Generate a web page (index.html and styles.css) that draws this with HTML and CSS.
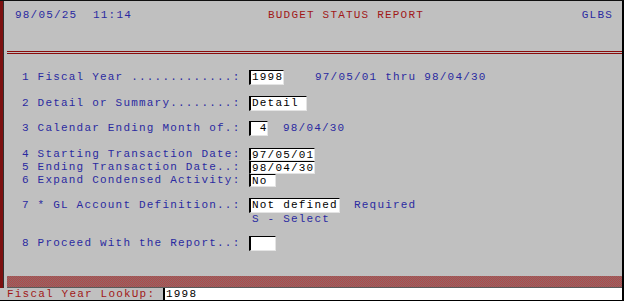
FILE: index.html
```html
<!DOCTYPE html>
<html lang="en">
<head>
    <meta charset="UTF-8">
    <title>Budget Status Report</title>
    <link rel="stylesheet" href="styles.css">
</head>
<body>
    <div class="screen">
        <div class="main">
            <div class="header">
                <span class="blue">98/05/25  11:14</span>
                <span class="red">BUDGET STATUS REPORT</span>
                <span class="blue">GLBS</span>
            </div>
            <div class="rule"></div>

            <div class="form">
                <div class="row r1">
                    <span class="label">1 Fiscal Year .............:</span>
                    <span class="field w35">1998</span>
                    <span class="note gap31">97/05/01 thru 98/04/30</span>
                </div>
                <div class="row r2">
                    <span class="label">2 Detail or Summary........:</span>
                    <span class="field w58">Detail</span>
                </div>
                <div class="row r3">
                    <span class="label">3 Calendar Ending Month of.:</span>
                    <span class="field w19"> 4</span>
                    <span class="note gap15">98/04/30</span>
                </div>
                <div class="row r4">
                    <span class="label">4 Starting Transaction Date:</span>
                    <span class="field w66 short">97/05/01</span>
                </div>
                <div class="row r5">
                    <span class="label">5 Ending Transaction Date..:</span>
                    <span class="field w66 short">98/04/30</span>
                </div>
                <div class="row r6">
                    <span class="label">6 Expand Condensed Activity:</span>
                    <span class="field w27 short">No</span>
                </div>
                <div class="row r7">
                    <span class="label">7 * GL Account Definition..:</span>
                    <span class="field w91">Not defined</span>
                    <span class="note gap14">Required</span>
                </div>
                <div class="row r7b">
                    <span class="label"></span>
                    <span class="note hint">S - Select</span>
                </div>
                <div class="row r8">
                    <span class="label">8 Proceed with the Report..:</span>
                    <span class="field w27"></span>
                </div>
            </div>

            <div class="band"></div>
        </div>
        <div class="status">
            <span class="status-label">Fiscal Year LookUp:</span>
            <span class="status-field">1998</span>
        </div>
    </div>
</body>
</html>
```

FILE: styles.css
```css
body {
    margin: 0;
    background: #ffffff;
}

.screen {
    width: 624px;
    height: 301px;
    box-sizing: border-box;
    border-top: 1px solid #101010;
    border-right: 2px solid #000;
    border-bottom: 1px solid #000;
    background: #c0c0c0;
    font-family: "Liberation Mono", "DejaVu Sans Mono", monospace;
    font-size: 11px;
    letter-spacing: 1.2px;
    display: flex;
    flex-direction: column;
}

.main {
    height: 287px;
    border-left: 3px solid #7c1010;
    box-shadow: inset 1px 0 0 #303030;
    display: flex;
    flex-direction: column;
}

.blue {
    color: #2a2aa0;
}

.red {
    color: #a01818;
}

.header {
    height: 50px;
    box-sizing: border-box;
    padding: 7px 9px 0 12px;
    line-height: 14px;
    display: grid;
    grid-template-columns: 253px 1fr auto;
    white-space: pre;
}

.rule {
    margin-left: 4px;
    height: 1px;
    border-top: 1px solid #8a0c0c;
    border-bottom: 1px solid #8a0c0c;
}

.form {
    padding-left: 19px;
    display: flex;
    flex-direction: column;
    color: #2a2aa0;
}

.row {
    display: flex;
    align-items: center;
    height: 16px;
    white-space: pre;
}

.r1 { margin-top: 15px; }
.r2 { margin-top: 10px; }
.r3 { margin-top: 9px; }
.r4 { margin-top: 11px; height: 14px; }
.r5 { height: 12px; }
.r6 { height: 14px; }
.r7 { margin-top: 10px; }
.r7b { height: 11px; }
.r8 { margin-top: 11px; }

.label {
    width: 227px;
    flex: none;
}

.field {
    height: 15px;
    box-sizing: border-box;
    background: #fff;
    color: #000;
    border-top: 1px solid #000;
    border-left: 2px solid #000;
    border-right: 1px solid #e4e4e4;
    border-bottom: 1px solid #e4e4e4;
    padding-left: 1px;
    line-height: 13px;
    overflow: hidden;
}

.field.short {
    height: 13px;
    line-height: 12px;
}

.w19 { width: 19px; }
.w27 { width: 27px; }
.w35 { width: 35px; }
.w58 { width: 58px; }
.w66 { width: 66px; }
.w91 { width: 91px; }

.gap31 { margin-left: 31px; }
.gap15 { margin-left: 15px; }
.gap14 { margin-left: 14px; }

.hint {
    margin-left: 3px;
}

.band {
    margin-top: auto;
    margin-left: 4px;
    height: 11px;
    border-bottom: 1px solid #5a5a5a;
    background: repeating-conic-gradient(#b44646 0 25%, #8e6a6a 0 50%) 0 0 / 2px 2px;
}

.status {
    height: 12px;
    display: flex;
    overflow: hidden;
    line-height: 13px;
    white-space: pre;
}

.status-label {
    width: 156px;
    padding-left: 7px;
    color: #a01818;
}

.status-field {
    flex: 1;
    background: #fff;
    color: #000;
    border-left: 2px solid #000;
    padding-left: 1px;
}
```
